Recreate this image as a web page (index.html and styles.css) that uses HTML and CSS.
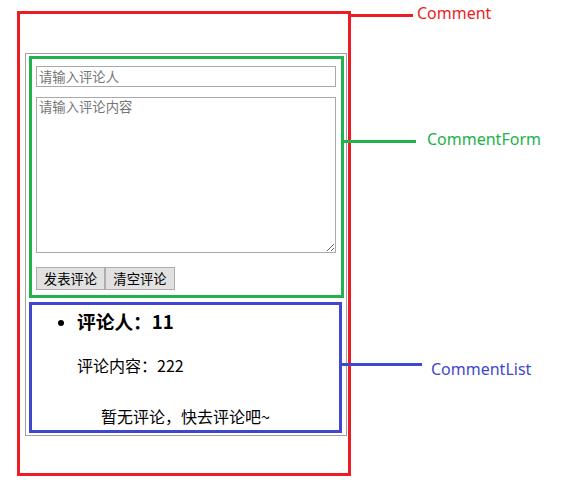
FILE: index.html
```html
<!DOCTYPE html>
<html lang="zh">
<head>
<meta charset="utf-8">
<title>Comment</title>
<link rel="stylesheet" href="styles.css">
</head>
<body>
<div class="stage">
  <div class="comment">
    <div class="app">
      <form class="comment-form">
        <input class="field" type="text" placeholder="请输入评论人">
        <textarea class="area" placeholder="请输入评论内容"></textarea>
        <div class="actions">
          <button type="button" class="btn">发表评论</button><button type="button" class="btn">清空评论</button>
        </div>
      </form>
      <div class="comment-list">
        <ul class="list">
          <li>
            <h3 class="who">评论人：11</h3>
            <p class="what">评论内容：222</p>
          </li>
        </ul>
        <div class="empty">暂无评论，快去评论吧~</div>
      </div>
    </div>
  </div>

  <div class="line line-red"></div>
  <div class="label label-red">Comment</div>
  <div class="line line-green"></div>
  <div class="label label-green">CommentForm</div>
  <div class="line line-blue"></div>
  <div class="label label-blue">CommentList</div>
</div>
</body>
</html>
```
FILE: styles.css
```css
html, body {
  margin: 0;
  padding: 0;
  background: #fff;
}
body {
  font-family: "Noto Sans CJK SC", "Noto Sans", sans-serif;
  color: #000;
}
.stage {
  position: relative;
  width: 577px;
  height: 488px;
  overflow: hidden;
}
.comment {
  margin: 11px 0 0 17px;
  width: 334px;
  height: 465px;
  box-sizing: border-box;
  border: 3px solid #ed1c24;
  padding: 39px 1px 0 5px;
}
.app {
  width: 322px;
  box-sizing: border-box;
  border: 1px solid #a0a0a0;
  padding: 2px 2px 2px 3px;
}
.comment-form {
  margin: 0;
  width: 315px;
  height: 242px;
  box-sizing: border-box;
  border: 3px solid #22b14c;
  padding: 7px 0 0 4px;
  display: flex;
  flex-direction: column;
  align-items: flex-start;
}
.field, .area {
  width: 300px;
  box-sizing: border-box;
  border: 1px solid #a9a9a9;
  margin: 0;
  padding: 0 2px;
  font-family: "Noto Sans CJK SC", sans-serif;
  font-size: 13.33px;
  outline: none;
}
.field {
  height: 21px;
  line-height: 19px;
}
.area {
  height: 156px;
  margin-top: 10px;
  padding: 1px 2px;
  line-height: 16px;
  resize: vertical;
}
.field::placeholder, .area::placeholder {
  color: #757575;
}
.actions {
  margin-top: 14px;
  display: flex;
}
.btn {
  height: 23px;
  box-sizing: border-box;
  margin: 0;
  padding: 0 6px;
  border: 1px solid #adadad;
  background: #e1e1e1;
  font-family: "Noto Sans CJK SC", sans-serif;
  font-size: 13.33px;
  line-height: 19px;
  color: #000;
}
.btn + .btn { width: 70px; }
.btn:first-child { width: 69px; }
.comment-list {
  margin-top: 4px;
  width: 313px;
  box-sizing: border-box;
  border: 3px solid #3f48cc;
  padding: 3px 0 3px 0;
}
.list {
  margin: 0;
  padding-left: 45px;
}
.who {
  margin: 0;
  font-size: 18.72px;
  line-height: 26px;
  font-weight: bold;
}
.what {
  margin: 20px 0 0;
  font-size: 16px;
  line-height: 22px;
}
.empty {
  margin-top: 29px;
  font-size: 16px;
  line-height: 22px;
  text-align: center;
}
.line {
  position: absolute;
  height: 3px;
}
.line-red { left: 351px; top: 14px; width: 62px; background: #ed1c24; }
.line-green { left: 344px; top: 140px; width: 72px; background: #22b14c; }
.line-blue { left: 342px; top: 363px; width: 80px; background: #3f48cc; }
.label {
  position: absolute;
  font-family: "Noto Sans", sans-serif;
  font-size: 16px;
  line-height: 20px;
  white-space: nowrap;
}
.label-red { left: 417px; top: 3px; color: #ed1c24; }
.label-green { left: 427px; top: 129px; color: #22b14c; }
.label-blue { left: 431px; top: 359px; color: #3f48cc; }
```
